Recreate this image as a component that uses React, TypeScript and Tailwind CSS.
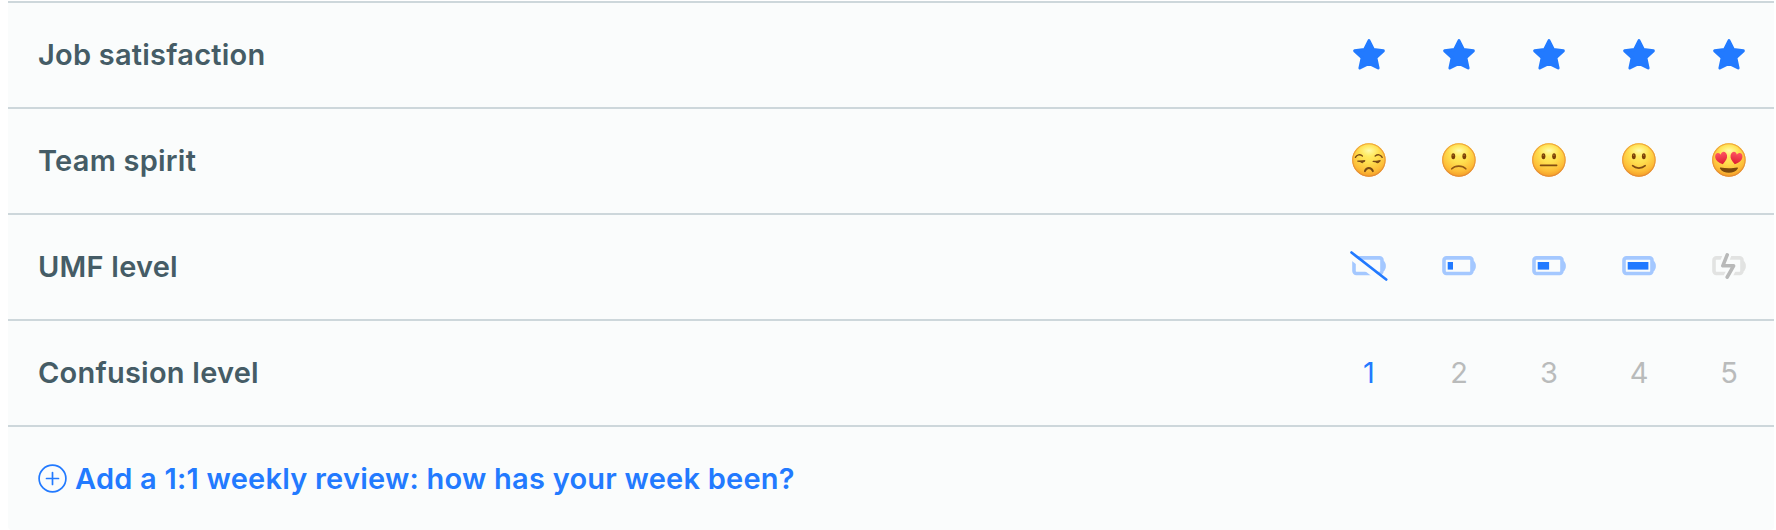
import React from "react";

const SLOTS = [1, 2, 3, 4, 5];

const Star = () => (
  <svg width="34" height="34" viewBox="0.8 1.2 32.4 32.4" fill="#227aff">
    <path
      d="M17 3.7l4.2 8.4 9.5 1.3-7.1 6.6 2.1 9.8-8.7-4.3-8.7 4.3 2.1-9.8-7.1-6.6 9.5-1.3z"
      stroke="#227aff"
      strokeWidth="2.8"
      strokeLinejoin="round"
    />
  </svg>
);

const Eyes = ({ x = 5.3 }: { x?: number }) => (
  <g>
    <ellipse cx={16.8 - x} cy="13.3" rx="1.9" ry="3" fill="#794008" />
    <ellipse cx={16.8 + x} cy="13.3" rx="1.9" ry="3" fill="#794008" />
    <circle cx={16.6 - x} cy="12.2" r="0.7" fill="#b57a25" />
    <circle cx={16.6 + x} cy="12.2" r="0.7" fill="#b57a25" />
  </g>
);

const Heart = ({ x, rotate }: { x: number; rotate: number }) => (
  <path
    transform={`translate(${x} 14.8) rotate(${rotate})`}
    d="M0 6.6C-3.8 4-6 1.6-6-1.3-6-3.8-4.6-5.4-2.8-5.4-1.4-5.4-.5-4.4 0-3.2 .5-4.4 1.4-5.4 2.8-5.4 4.6-5.4 6-3.8 6-1.3 6 1.6 3.8 4 0 6.6z"
    fill="url(#heart)"
  />
);

const FACES = [
  <g fill="none" stroke="#794b16" strokeWidth="1.4" strokeLinecap="round">
    <path d="M3.4 14.3c1.5-2.8 4.5-3.3 7-1.3M30.2 14.3c-1.5-2.8-4.5-3.3-7-1.3" />
    <path d="M5.8 18.1c2.3.3 4.5.3 6.7-.1M21.2 18.4c2.3.2 4.5 0 6.7-.5" />
    <path d="M8.6 18.6q1.8 1.9 3.4-.4zM24 18.7q1.8 1.8 3.4-.6z" fill="#69400f" />
    <path d="M12.9 28.2c1.6-4.2 6.4-4.2 8 0" strokeWidth="1.9" />
  </g>,
  <g>
    <Eyes x={5.5} />
    <path d="M9.8 25.8c3.4-3.6 10.6-3.6 14 0" fill="none" stroke="#915714" strokeWidth="1.6" strokeLinecap="round" />
  </g>,
  <g>
    <Eyes />
    <path d="M8.6 22.3h16" stroke="#814d12" strokeWidth="1.7" strokeLinecap="round" />
  </g>,
  <g>
    <Eyes x={5} />
    <path d="M10.6 22.7c3.4 3.1 9.2 3.1 12.6 0" fill="none" stroke="#814d12" strokeWidth="1.7" strokeLinecap="round" />
  </g>,
  <g>
    <Heart x={9.4} rotate={-12} />
    <Heart x={24.2} rotate={12} />
    <path d="M8.6 24.4c5 1 11.8 1 16.6 0 .8 0 .9.7.5 1.4-2.8 5.4-14.8 5.4-17.6 0-.4-.7-.3-1.4.5-1.4z" fill="#7b490d" />
  </g>,
];

const Face = ({ level }: { level: number }) => (
  <svg className="-mt-[3px]" width="34" height="34" viewBox="0 0 34 34">
    <circle cx="16.9" cy="17" r="16.7" fill="url(#face)" />
    <ellipse cx="16.9" cy="7.6" rx="11" ry="6.4" fill="url(#shine)" />
    <circle cx="16.9" cy="17" r="16.2" fill="none" stroke="url(#rim)" strokeWidth="1.1" />
    {FACES[level - 1]}
  </svg>
);

const Battery = ({ level }: { level: number }) => {
  const fills = [0, 5.3, 11.4, 20.7];
  const charging = level === 5;
  return (
    <svg className="-mt-0.5" width="38" height="30" viewBox="0 0 38 30">
      <g fill={charging ? "#e2e3e2" : "#a4c8ff"}>
        <path d="M33 10h.5q1.2 0 1.5 1.5l.7 1.5q.4 1.8 0 4l-.7 1.5q-.3 1.5-1.5 1.5H33z" />
        <rect
          x="4"
          y="6.9"
          width="28"
          height="15.6"
          rx="2.4"
          fill="none"
          stroke={charging ? "#e2e3e2" : "#a4c8ff"}
          strokeWidth="3.6"
        />
      </g>
      {level > 1 && level < 5 && <rect x="7.7" y="11" width={fills[level - 1]} height="7.6" fill="#227aff" />}
      {level === 1 && (
        <g strokeLinecap="round">
          <path d="M-1 4.5l35 27" stroke="#fafcfc" strokeWidth="5" />
          <path d="M1.5 1.5l34.7 27" stroke="#227aff" strokeWidth="2.7" />
        </g>
      )}
      {charging && (
        <g fill="none" strokeLinejoin="round" strokeLinecap="round">
          <path d="M17.4 3.2L12.8 15h10.6L17.2 27" stroke="#fafcfc" strokeWidth="8.4" />
          <path d="M17.2 3.8L12.8 14.8h10.8L17.2 26.2" stroke="#b8b9b9" strokeWidth="3.6" />
        </g>
      )}
    </svg>
  );
};

const Digit = ({ level }: { level: number }) => (
  <span className={level === 1 ? "text-[#227aff]" : "text-[#b9bbbb]"}>{level}</span>
);

const ROWS = [
  { label: "Job satisfaction", Item: Star },
  { label: "Team spirit", Item: Face },
  { label: "UMF level", Item: Battery },
  { label: "Confusion level", Item: Digit },
];

const Gradients = () => (
  <svg width="0" height="0" className="absolute">
    <defs>
      <radialGradient id="face" cx="0.5" cy="0.3" r="0.72">
        <stop offset="0" stopColor="#fff06a" />
        <stop offset="0.4" stopColor="#ffdf4f" />
        <stop offset="0.75" stopColor="#fdbd38" />
        <stop offset="1" stopColor="#f29623" />
      </radialGradient>
      <radialGradient id="shine">
        <stop offset="0" stopColor="#fffbb0" />
        <stop offset="1" stopColor="#fff27a" stopOpacity="0" />
      </radialGradient>
      <linearGradient id="rim" x1="0" y1="0" x2="0" y2="1">
        <stop offset="0" stopColor="#f0a53a" />
        <stop offset="1" stopColor="#e38a35" />
      </linearGradient>
      <linearGradient id="heart" x1="0" y1="0" x2="0" y2="1">
        <stop offset="0" stopColor="#ff5563" />
        <stop offset="1" stopColor="#dc1c30" />
      </linearGradient>
    </defs>
  </svg>
);

export default function App() {
  return (
    <div className="h-[530px] w-full overflow-hidden bg-white pt-px pr-0.5 pl-2 font-[Inter,sans-serif] text-[29px]">
      <Gradients />
      <div className="h-[529px] overflow-hidden rounded-b bg-[#fafcfc]">
        {ROWS.map(({ label, Item }) => (
          <div key={label} className="flex h-[106px] items-center justify-between border-t-2 border-[#cdd7db] pl-[30px]">
            <span className="font-semibold tracking-[0.23px] text-[#455c66]">{label}</span>
            <div className="flex items-center">
              {SLOTS.map((n) => (
                <span key={n} className="flex w-[90px] justify-center">
                  <Item level={n} />
                </span>
              ))}
            </div>
          </div>
        ))}
        <div className="flex h-[106px] items-center border-t-2 border-[#cdd7db] pl-[30px]">
          <button className="flex items-center gap-2 font-semibold tracking-[0.23px] text-[#227aff]">
            <svg className="-mt-0.5" width="29" height="29" viewBox="0 0 29 29" fill="none" stroke="#227aff" strokeWidth="1.7" strokeLinecap="round">
              <circle cx="14.5" cy="14.5" r="13.4" />
              <path d="M14.5 8.5v12M8.5 14.5h12" />
            </svg>
            Add a 1:1 weekly review: how has your week been?
          </button>
        </div>
      </div>
    </div>
  );
}
